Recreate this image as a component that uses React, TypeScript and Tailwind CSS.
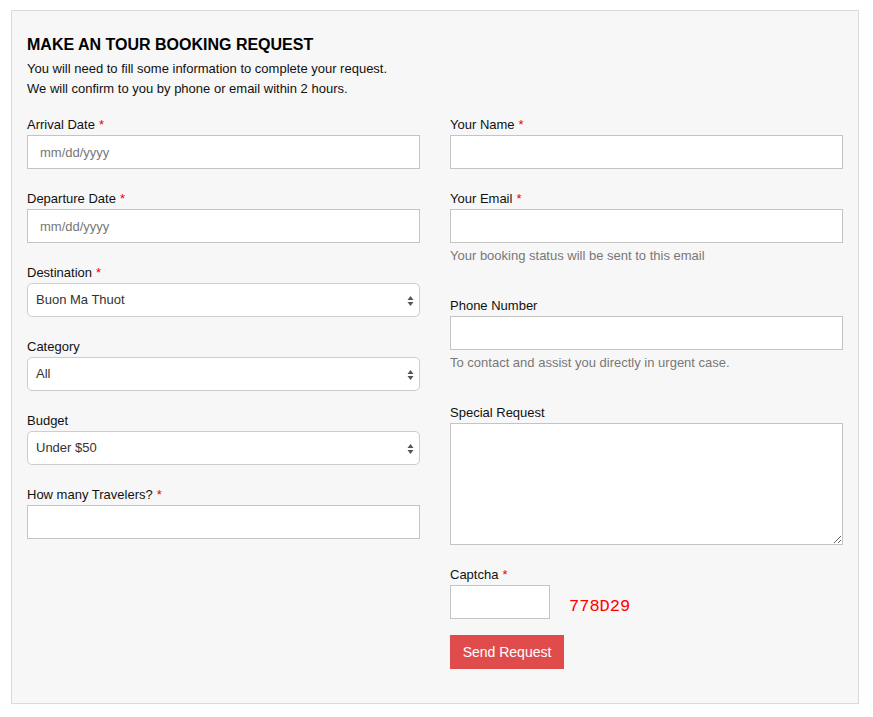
import type { ReactNode } from "react";

function Label({ text, required }: { text: string; required?: boolean }) {
  return (
    <label className="block h-5 text-[13px] leading-5 text-[#111]">
      {text}
      {required && <span className="ml-1 text-[#e00]">*</span>}
    </label>
  );
}

function Field({ children, className = "" }: { children: ReactNode; className?: string }) {
  return <div className={`mb-5 ${className}`}>{children}</div>;
}

function TextInput({ placeholder }: { placeholder?: string }) {
  return (
    <input
      type="text"
      placeholder={placeholder}
      className="block h-[34px] w-full border border-[#c4c4c4] bg-white px-3 text-[13px] text-[#333] outline-none placeholder:text-[#777]"
    />
  );
}

function Select({ value }: { value: string }) {
  return (
    <div className="relative h-[34px] w-full rounded-[5px] border border-[#cdcdcd] bg-white">
      <div className="flex h-full items-center pl-2 text-[13px] text-[#333]">{value}</div>
      <svg className="absolute right-[5px] top-[11px]" width="7" height="12" viewBox="0 0 7 12">
        <path d="M3.5 1 L6.5 5 L0.5 5 Z" fill="#555" />
        <path d="M3.5 11 L6.5 7 L0.5 7 Z" fill="#555" />
      </svg>
    </div>
  );
}

function Help({ text }: { text: string }) {
  return <p className="mt-[3px] text-[13px] leading-5 text-[#777]">{text}</p>;
}

export default function App() {
  return (
    <div className="min-h-screen bg-white pl-[11px] pt-[10px] font-['Liberation_Sans',Arial,sans-serif]">
      <div className="h-[694px] w-[848px] border border-[#dadada] bg-[#f7f7f7] px-[15px] pt-[24px]">
        <h2 className="text-[16px] font-bold leading-5 text-black">MAKE AN TOUR BOOKING REQUEST</h2>
        <p className="mt-1 text-[13px] leading-5 text-[#111]">
          You will need to fill some information to complete your request.
        </p>
        <p className="text-[13px] leading-5 text-[#111]">We will confirm to you by phone or email within 2 hours.</p>

        <div className="mt-4 grid grid-cols-[393px_393px] gap-x-[30px]">
          <div>
            <Field>
              <Label text="Arrival Date" required />
              <TextInput placeholder="mm/dd/yyyy" />
            </Field>
            <Field>
              <Label text="Departure Date" required />
              <TextInput placeholder="mm/dd/yyyy" />
            </Field>
            <Field>
              <Label text="Destination" required />
              <Select value="Buon Ma Thuot" />
            </Field>
            <Field>
              <Label text="Category" />
              <Select value="All" />
            </Field>
            <Field>
              <Label text="Budget" />
              <Select value="Under $50" />
            </Field>
            <Field>
              <Label text="How many Travelers?" required />
              <TextInput />
            </Field>
          </div>

          <div>
            <Field>
              <Label text="Your Name" required />
              <TextInput />
            </Field>
            <Field className="mb-[30px]">
              <Label text="Your Email" required />
              <TextInput />
              <Help text="Your booking status will be sent to this email" />
            </Field>
            <Field className="mb-[30px]">
              <Label text="Phone Number" />
              <TextInput />
              <Help text="To contact and assist you directly in urgent case." />
            </Field>
            <Field>
              <Label text="Special Request" />
              <textarea className="block h-[122px] w-full border border-[#c4c4c4] bg-white px-3 py-2 text-[13px] outline-none" />
            </Field>
            <div>
              <Label text="Captcha" required />
              <div className="flex items-center">
                <input
                  type="text"
                  className="block h-[34px] w-[100px] border border-[#c4c4c4] bg-white px-2 text-[13px] outline-none"
                />
                <span className="ml-[19px] mt-[9px] font-['Liberation_Mono',monospace] text-[17px] leading-5 text-[#f00]">
                  778D29
                </span>
              </div>
              <button className="mt-4 h-[34px] w-[114px] bg-[#e04c4c] text-[14px] text-white">Send Request</button>
            </div>
          </div>
        </div>
      </div>
    </div>
  );
}
